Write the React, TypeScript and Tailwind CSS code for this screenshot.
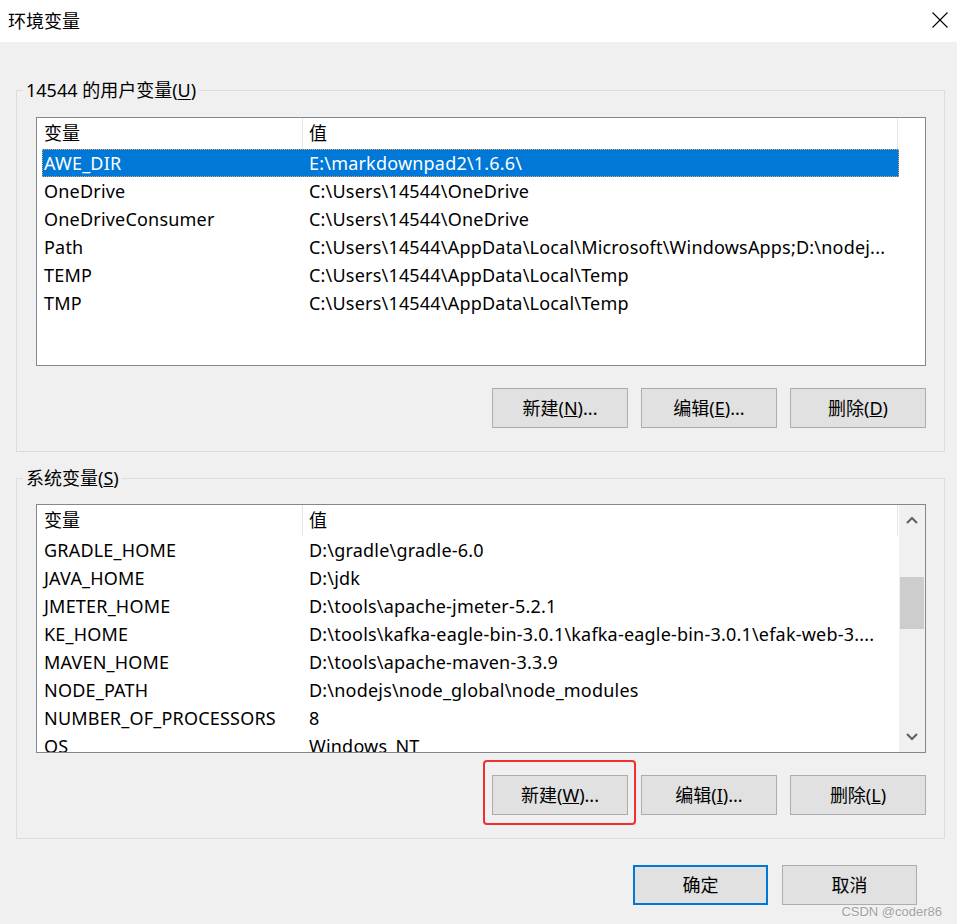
import type { ReactNode } from "react";

type Row = { name: string; value: string };

const userVars: Row[] = [
  { name: "AWE_DIR", value: "E:\\markdownpad2\\1.6.6\\" },
  { name: "OneDrive", value: "C:\\Users\\14544\\OneDrive" },
  { name: "OneDriveConsumer", value: "C:\\Users\\14544\\OneDrive" },
  { name: "Path", value: "C:\\Users\\14544\\AppData\\Local\\Microsoft\\WindowsApps;D:\\nodej..." },
  { name: "TEMP", value: "C:\\Users\\14544\\AppData\\Local\\Temp" },
  { name: "TMP", value: "C:\\Users\\14544\\AppData\\Local\\Temp" },
];

const systemVars: Row[] = [
  { name: "GRADLE_HOME", value: "D:\\gradle\\gradle-6.0" },
  { name: "JAVA_HOME", value: "D:\\jdk" },
  { name: "JMETER_HOME", value: "D:\\tools\\apache-jmeter-5.2.1" },
  { name: "KE_HOME", value: "D:\\tools\\kafka-eagle-bin-3.0.1\\kafka-eagle-bin-3.0.1\\efak-web-3...." },
  { name: "MAVEN_HOME", value: "D:\\tools\\apache-maven-3.3.9" },
  { name: "NODE_PATH", value: "D:\\nodejs\\node_global\\node_modules" },
  { name: "NUMBER_OF_PROCESSORS", value: "8" },
  { name: "OS", value: "Windows_NT" },
];

export default function App() {
  return (
    <div className="relative flex h-[924px] w-[957px] flex-col overflow-hidden bg-[#f0f0f0] font-['Noto_Sans','Noto_Sans_CJK_SC',sans-serif] text-[18px] text-black">
      {/* 标题栏 */}
      <div className="flex h-[42px] shrink-0 items-center justify-between bg-white pl-[8px] pr-[9px]">
        <span className="leading-none">环境变量</span>
        <svg width="16" height="16" viewBox="0 0 16 16" className="mb-[2px]">
          <path d="M0.5 0.5 L15.5 15.5 M15.5 0.5 L0.5 15.5" stroke="#000" strokeWidth="1.1" />
        </svg>
      </div>

      <div className="flex flex-col pl-[16px] pr-[12px]">
        {/* 用户变量 */}
        <GroupBox
          className="mt-[36px]"
          title={
            <>
              14544 的用户变量(<u className="underline-offset-2">U</u>)
            </>
          }
        >
          <ListView rows={userVars} selected={0} />
          <ButtonRow
            labels={[
              <>新建(<u>N</u>)...</>,
              <>编辑(<u>E</u>)...</>,
              <>删除(<u>D</u>)</>,
            ]}
          />
        </GroupBox>

        {/* 系统变量 */}
        <GroupBox
          className="mt-[14px]"
          innerTop="pt-[14px]"
          title={
            <>
              系统变量(<u>S</u>)
            </>
          }
        >
          <ListView rows={systemVars} scrollbar />
          <ButtonRow
            highlightFirst
            labels={[
              <>新建(<u>W</u>)...</>,
              <>编辑(<u>I</u>)...</>,
              <>删除(<u>L</u>)</>,
            ]}
          />
        </GroupBox>
      </div>

      {/* 确定 / 取消 */}
      <div className="mt-[26px] flex justify-end gap-[14px] pr-[40px]">
        <button className="flex h-[40px] w-[135px] items-center justify-center border-2 border-[#0078d7] bg-[#e1e1e1]">
          确定
        </button>
        <button className="flex h-[40px] w-[135px] items-center justify-center border border-[#adadad] bg-[#e1e1e1]">
          取消
        </button>
      </div>

      <span className="absolute bottom-[6px] right-[15px] font-['Liberation_Sans',sans-serif] text-[13px] leading-none text-[#a0a0a0] [text-shadow:0_0_2px_#ffffff]">
        CSDN @coder86
      </span>
    </div>
  );
}

function GroupBox({
  title,
  children,
  className = "",
  innerTop = "pt-[15px]",
}: {
  title: ReactNode;
  children: ReactNode;
  className?: string;
  innerTop?: string;
}) {
  return (
    <fieldset className={`border border-[#dcdcdc] ${className}`}>
      <legend className="ml-[6px] px-[3px] leading-[24px]">{title}</legend>
      <div className={`flex flex-col pb-[23px] pl-[19px] pr-[18px] ${innerTop}`}>{children}</div>
    </fieldset>
  );
}

function ListView({
  rows,
  selected,
  scrollbar = false,
}: {
  rows: Row[];
  selected?: number;
  scrollbar?: boolean;
}) {
  return (
    <div className="flex h-[249px] overflow-hidden border border-[#828790] bg-white">
      <div className="flex w-[862px] shrink-0 flex-col">
        {/* 列标题 */}
        <div className="flex h-[31px] shrink-0 items-center">
          <div className="flex h-full w-[266px] items-center border-r border-[#e5e5e5] pl-[7px]">变量</div>
          <div className="flex h-full w-[595px] items-center border-r border-[#e5e5e5] pl-[6px]">值</div>
        </div>
        {rows.map((row, i) => {
          const isSel = i === selected;
          return (
            <div
              key={row.name}
              className={`ml-[5px] flex h-[28px] w-[857px] shrink-0 items-center whitespace-nowrap tracking-[0.2px] ${
                isSel
                  ? "bg-[#0078d7] text-white outline-1 -outline-offset-1 outline-dotted outline-[#e8a25a]"
                  : ""
              }`}
            >
              <div className="w-[261px] overflow-hidden pl-[2px]">{row.name}</div>
              <div className="flex-1 overflow-hidden pl-[6px]">{row.value}</div>
            </div>
          );
        })}
      </div>
      {scrollbar && (
        <div className="ml-auto flex w-[26px] flex-col bg-[#f0f0f0]">
          <div className="flex h-[30px] shrink-0 items-center justify-center">
            <svg width="12" height="8" viewBox="0 0 12 8">
              <path d="M1 7 L6 2 L11 7" fill="none" stroke="#606060" strokeWidth="2" />
            </svg>
          </div>
          <div className="flex-1">
            <div className="mx-[1px] mt-[42px] h-[52px] bg-[#cdcdcd]" />
          </div>
          <div className="flex h-[30px] shrink-0 items-center justify-center">
            <svg width="12" height="8" viewBox="0 0 12 8">
              <path d="M1 1 L6 6 L11 1" fill="none" stroke="#606060" strokeWidth="2" />
            </svg>
          </div>
        </div>
      )}
    </div>
  );
}

function ButtonRow({ labels, highlightFirst = false }: { labels: ReactNode[]; highlightFirst?: boolean }) {
  return (
    <div className="mt-[22px] flex justify-end gap-[13px]">
      {labels.map((label, i) => (
        <div key={i} className="relative">
          <button className="flex h-[40px] w-[136px] items-center justify-center border border-[#adadad] bg-[#e1e1e1]">
            {label}
          </button>
          {highlightFirst && i === 0 && (
            <div className="pointer-events-none absolute -bottom-[10px] -left-[9px] -right-[8px] -top-[15px] rounded-[4px] border-2 border-[#ee3030]" />
          )}
        </div>
      ))}
    </div>
  );
}
